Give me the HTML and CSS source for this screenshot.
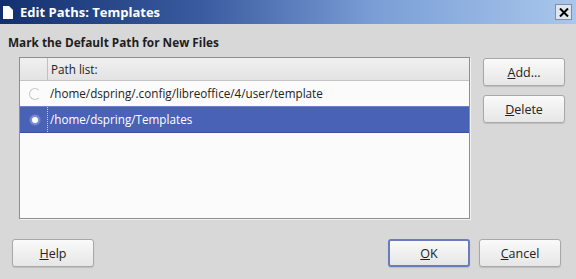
FILE: index.html
```html
<!DOCTYPE html>
<html lang="en">
<head>
    <meta charset="UTF-8">
    <title>Edit Paths: Templates</title>
    <link rel="stylesheet" href="styles.css">
</head>
<body>
    <div class="titlebar">
        <svg class="title-icon" width="10" height="13" viewBox="0 0 10 13">
            <path d="M0 0 H6 L10 4 V13 H0 Z" fill="#fff"/>
        </svg>
        <span class="title-text">Edit Paths: Templates</span>
        <span class="close-btn">
            <svg width="10" height="9" viewBox="0 0 10 9">
                <path d="M1 0.5 L9 8.5 M9 0.5 L1 8.5" stroke="#000" stroke-width="2"/>
            </svg>
        </span>
    </div>

    <div class="dialog">
        <div class="heading">Mark the Default Path for New Files</div>

        <div class="main">
            <div class="pathlist">
                <div class="list-header">
                    <div class="col-check"></div>
                    <div class="col-path">Path list:</div>
                </div>
                <div class="row">
                    <div class="col-check"><span class="radio"></span></div>
                    <div class="col-path">/home/dspring/.config/libreoffice/4/user/template</div>
                </div>
                <div class="row selected">
                    <div class="col-check"><span class="radio on"></span></div>
                    <div class="col-path">/home/dspring/Templates</div>
                </div>
            </div>

            <div class="side">
                <button class="btn"><u>A</u>dd...</button>
                <button class="btn"><u>D</u>elete</button>
            </div>
        </div>

        <div class="footer">
            <button class="btn"><u>H</u>elp</button>
            <div class="spacer"></div>
            <button class="btn default"><u>O</u>K</button>
            <button class="btn"><u>C</u>ancel</button>
        </div>
    </div>
</body>
</html>
```

FILE: styles.css
```css
body {
    margin: 0;
    font-family: "Open Sans", "DejaVu Sans", sans-serif;
    background: #d8d8d8;
    color: #222;
    width: 576px;
    height: 279px;
    overflow: hidden;
}
.titlebar {
    height: 24px;
    display: flex;
    align-items: center;
    background: linear-gradient(to right, #13306e 0%, #3a5ba0 35%, #7a9ed6 65%, #a9c7ec 100%);
    padding: 0 3px;
}
.title-icon {
    margin-right: 7px;
    margin-top: 1px;
}
.title-text {
    color: #fff;
    font-weight: bold;
    font-size: 13px;
    flex: 1;
}
.close-btn {
    width: 15px;
    height: 14px;
    background: #dfe6ee;
    border: 1px solid #7d8fa8;
    display: flex;
    align-items: center;
    justify-content: center;
    margin-right: 1px;
}
.dialog {
    padding: 9px 0 0 0;
}
.heading {
    font-weight: bold;
    font-size: 11.8px;
    line-height: 18px;
    padding-left: 8px;
    color: #1e1e1e;
}
.main {
    display: flex;
    margin-top: 6px;
    padding-left: 19px;
}
.pathlist {
    width: 449px;
    height: 160px;
    background: #fbfbfb;
    border: 1px solid #8e8e8e;
    box-shadow: 1px 1px 0 #f2f2f2;
}
.list-header {
    display: flex;
    height: 22px;
    background: linear-gradient(#f0f0f0, #e3e3e3);
    border-bottom: 1px solid #c4c4c4;
    font-size: 11.7px;
    line-height: 22px;
}
.list-header .col-check {
    border-right: 1px solid #c0c0c0;
}
.col-check {
    width: 27px;
    display: flex;
    align-items: center;
    justify-content: center;
}
.col-path {
    padding-left: 3px;
}
.row {
    display: flex;
    height: 25px;
    line-height: 25px;
    font-size: 11.7px;
}
.row.selected {
    background: #4a62b6;
    color: #fff;
    border-top: 1px solid #6b80c8;
    border-bottom: 1px solid #3b50a0;
}
.row.selected .col-path {
    border-left: 1px dotted #c8d0ee;
    padding-left: 2px;
}
.radio {
    width: 10px;
    height: 10px;
    border-radius: 50%;
    border: 1px solid #c8c8c8;
    border-right-color: transparent;
    background: #fbfbfb;
    margin-left: 2px;
}
.radio.on {
    width: 6px;
    height: 6px;
    border: 2px solid #7d8fd0;
    background: #fff;
    box-shadow: 0 0 0 1px #5b70c0;
}
.side {
    display: flex;
    flex-direction: column;
    gap: 9px;
    margin-left: 13px;
    padding-top: 1px;
}
.btn {
    width: 82px;
    height: 28px;
    font-family: "Open Sans", "DejaVu Sans", sans-serif;
    font-size: 12.5px;
    color: #222;
    background: linear-gradient(#fafafa, #e6e6e6);
    border: 1px solid #a8a8a8;
    border-radius: 3px;
    box-shadow: 0 1px 1px rgba(0, 0, 0, 0.12);
    padding: 0;
}
.footer {
    display: flex;
    align-items: center;
    padding: 0 15px 0 12px;
    margin-top: 20px;
    gap: 9px;
}
.spacer {
    flex: 1;
}
.btn.default {
    border: 2px solid #6a7cc0;
}
```
